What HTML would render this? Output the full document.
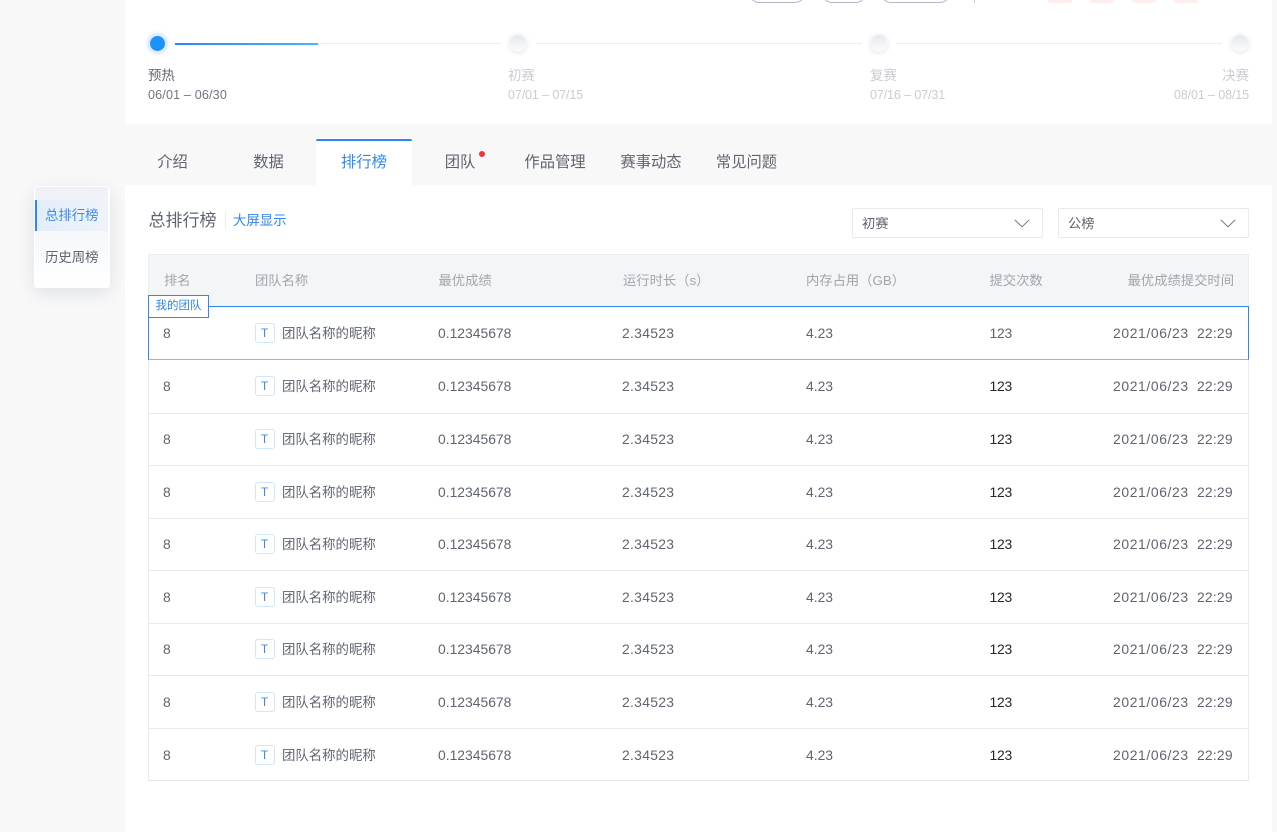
<!DOCTYPE html>
<html lang="zh">
<head>
<meta charset="utf-8">
<title>排行榜</title>
<style>
*{box-sizing:border-box;margin:0;padding:0}
html,body{width:1277px;height:832px;overflow:hidden;background:#f8f8f8}
body{position:relative;font-family:"Liberation Sans","Noto Sans CJK SC",sans-serif;color:#5f6570}
.a{position:absolute}
.t{position:absolute;white-space:nowrap;line-height:20px;height:20px}
.panel{position:absolute;background:#fff;left:125px;width:1147px}
.pill{position:absolute;top:-20px;height:23px;border:1px solid #b4bac6;border-radius:12px;background:#fff}
.red{position:absolute;top:0;height:3px;background:#ffeeee;border-radius:0 0 2px 2px}
.gl{position:absolute;top:43px;height:1px;background:#eceef2}
.gd{position:absolute;top:34px;width:18px;height:18px;border-radius:50%;background:linear-gradient(#e6e8ec,#fcfcfd);border:1px solid #f4f6f9;box-shadow:0 1px 5px rgba(120,140,180,.22)}
.sn{font-size:13.4px;color:#5f6570;top:66px}
.sd{font-size:12.6px;color:#6f7580;top:85px}
.off{color:#c9ccd2;}
.sd.off{letter-spacing:-.15px}
.tab{position:absolute;top:153px;font-size:15.3px;line-height:20px;color:#5f6570;white-space:nowrap;transform:translateX(-50%)}
.sel{position:absolute;top:208px;width:191px;height:30px;border:1px solid #e9eaec;border-radius:2px;background:#fff}
.sel span{position:absolute;left:9px;top:5px;font-size:13.3px;line-height:20px;color:#5f6570}
.sel svg{position:absolute;right:12px;top:10px}
.th{position:absolute;top:271px;font-size:13.3px;line-height:20px;color:#a1a5ac;white-space:nowrap}
.row{position:absolute;left:0;width:1277px;height:20px}
.row .t{top:0;font-size:13.9px;color:#5f6570}
.c1{left:163px}
.ic{position:absolute;left:254.5px;top:0;width:20px;height:20px;border:1px solid #cde8fb;border-radius:3px;font-size:12px;line-height:18px;text-align:center;color:#3d8bf2}
.row .nm{left:282px;font-size:13.4px;top:1px}
.c3{left:438px}
.row .c4{left:622px;letter-spacing:.3px}
.c5{left:806px}
.row .c6{left:989.5px;color:#24272c;letter-spacing:-.2px}
.row .c7{left:1113px;letter-spacing:.62px}
.row .c8{left:1197px;letter-spacing:.2px}
.line{position:absolute;left:148px;width:1101px;height:1px;background:#e9eaec}
</style>
</head>
<body>

<!-- top white panel -->
<div class="panel" style="top:0;height:124px"></div>
<!-- main white panel -->
<div class="panel" style="top:184.5px;height:648px"></div>

<!-- header remnants -->
<div class="pill" style="left:748px;width:58px"></div>
<div class="pill" style="left:821px;width:46px"></div>
<div class="pill" style="left:880px;width:71px"></div>
<div class="a" style="left:974px;top:0;width:1px;height:3px;background:#c8c8c8"></div>
<div class="red" style="left:1048px;width:24px"></div>
<div class="red" style="left:1090px;width:24px"></div>
<div class="red" style="left:1132px;width:24px"></div>
<div class="red" style="left:1174px;width:24px"></div>

<!-- stepper -->
<div class="a" style="left:148px;top:33.5px;width:19px;height:19px;border-radius:50%;background:#dfecff;box-shadow:0 0 4px rgba(70,130,240,.35)"></div>
<div class="a" style="left:150px;top:35.5px;width:15px;height:15px;border-radius:50%;background:#1c93fb"></div>
<div class="a" style="left:175px;top:42.5px;width:143px;height:2px;background:linear-gradient(90deg,#2f86f6,#49b4fb)"></div>
<div class="gl" style="left:318px;width:183px"></div>
<div class="gl" style="left:536px;width:326px"></div>
<div class="gl" style="left:896px;width:326px"></div>
<div class="gd" style="left:508.5px"></div>
<div class="gd" style="left:870px"></div>
<div class="gd" style="left:1230.5px"></div>

<div class="t sn" style="left:148px">预热</div>
<div class="t sd" style="left:148px;letter-spacing:.15px">06/01 – 06/30</div>
<div class="t sn off" style="left:508px">初赛</div>
<div class="t sd off" style="left:508px">07/01 – 07/15</div>
<div class="t sn off" style="left:870px">复赛</div>
<div class="t sd off" style="left:870px">07/16 – 07/31</div>
<div class="t sn off" style="right:28px">决赛</div>
<div class="t sd off" style="right:28px">08/01 – 08/15</div>

<!-- tabs -->
<div class="a" style="left:316px;top:139px;width:96px;height:46px;background:#fff;border-top:2px solid #2f86f6;border-radius:2px 2px 0 0"></div>
<div class="tab" style="left:172.5px">介绍</div>
<div class="tab" style="left:268.5px">数据</div>
<div class="tab" style="left:364px;color:#2f86f6">排行榜</div>
<div class="tab" style="left:460px">团队</div>
<div class="a" style="left:478.5px;top:150.5px;width:6px;height:6px;border-radius:50%;background:#f5333f"></div>
<div class="tab" style="left:555px">作品管理</div>
<div class="tab" style="left:651px">赛事动态</div>
<div class="tab" style="left:746.5px">常见问题</div>

<!-- side nav -->
<div class="a" style="left:34px;top:186px;width:76px;height:102px;border:2px solid #fff;border-width:1px 2px 2px 1px;border-radius:3px;background:linear-gradient(#eef1f6,#ffffff);box-shadow:0 5px 16px rgba(120,135,170,.2)"></div>
<div class="a" style="left:35px;top:200px;width:73px;height:31px;background:linear-gradient(90deg,#e3edfb,#eff3f9);border-left:2px solid #2f86f6"></div>
<div class="t" style="left:45px;top:206px;font-size:13.4px;color:#3d8bf2">总排行榜</div>
<div class="t" style="left:45px;top:248px;font-size:13.4px;color:#5f6570">历史周榜</div>

<!-- title -->
<div class="t" style="left:148.5px;top:211px;font-size:17px;color:#5f6570">总排行榜</div>
<div class="a" style="left:225px;top:211px;width:1px;height:18px;background:#eeeeee"></div>
<div class="t" style="left:233px;top:211px;font-size:13.4px;color:#2f86f6">大屏显示</div>

<!-- selects -->
<div class="sel" style="left:852px"><span>初赛</span><svg width="16" height="9" viewBox="0 0 16 9"><path d="M.8.8 8 7.8 15.2.8" fill="none" stroke="#70757e" stroke-width="1"/></svg></div>
<div class="sel" style="left:1058px"><span>公榜</span><svg width="16" height="9" viewBox="0 0 16 9"><path d="M.8.8 8 7.8 15.2.8" fill="none" stroke="#70757e" stroke-width="1"/></svg></div>

<!-- table frame -->
<div class="a" style="left:148px;top:254px;width:1101px;height:527px;border:1px solid #e9eaec;border-top:0"></div>
<div class="a" style="left:148px;top:254px;width:1101px;height:53px;background:#f4f5f7;border:1px solid #eceef0;border-bottom:0"></div>

<div class="th" style="left:164px">排名</div>
<div class="th" style="left:255px">团队名称</div>
<div class="th" style="left:438.5px">最优成绩</div>
<div class="th" style="left:623px">运行时长（s）</div>
<div class="th" style="left:806px">内存占用（GB）</div>
<div class="th" style="left:989.5px">提交次数</div>
<div class="th" style="right:43px">最优成绩提交时间</div>

<div class="line" style="top:412.5px"></div>
<div class="line" style="top:465px"></div>
<div class="line" style="top:517.5px"></div>
<div class="line" style="top:570px"></div>
<div class="line" style="top:622.8px"></div>
<div class="line" style="top:675.4px"></div>
<div class="line" style="top:728px"></div>
<div class="line" style="top:780.2px"></div>

<!-- my row highlight -->
<div class="a" style="left:148px;top:306px;width:1101px;height:54px;border:1px solid #2f86f6;border-bottom-color:#86b6f8;background:#fff"></div>
<div class="a" style="left:148px;top:295px;width:61px;height:23px;border:1px solid #2f86f6;background:#fff;font-size:11.5px;line-height:21px;text-align:center;color:#2f86f6;white-space:nowrap">我的团队</div>

<!-- rows -->
<div class="row" style="top:323px"><div class="t c1">8</div><div class="ic">T</div><div class="t nm">团队名称的昵称</div><div class="t c3">0.12345678</div><div class="t c4">2.34523</div><div class="t c5">4.23</div><div class="t c6" style="color:#5f6570">123</div><div class="t c7">2021/06/23</div><div class="t c8">22:29</div></div>
<div class="row" style="top:376px"><div class="t c1">8</div><div class="ic">T</div><div class="t nm">团队名称的昵称</div><div class="t c3">0.12345678</div><div class="t c4">2.34523</div><div class="t c5">4.23</div><div class="t c6">123</div><div class="t c7">2021/06/23</div><div class="t c8">22:29</div></div>
<div class="row" style="top:429px"><div class="t c1">8</div><div class="ic">T</div><div class="t nm">团队名称的昵称</div><div class="t c3">0.12345678</div><div class="t c4">2.34523</div><div class="t c5">4.23</div><div class="t c6">123</div><div class="t c7">2021/06/23</div><div class="t c8">22:29</div></div>
<div class="row" style="top:481.5px"><div class="t c1">8</div><div class="ic">T</div><div class="t nm">团队名称的昵称</div><div class="t c3">0.12345678</div><div class="t c4">2.34523</div><div class="t c5">4.23</div><div class="t c6">123</div><div class="t c7">2021/06/23</div><div class="t c8">22:29</div></div>
<div class="row" style="top:534px"><div class="t c1">8</div><div class="ic">T</div><div class="t nm">团队名称的昵称</div><div class="t c3">0.12345678</div><div class="t c4">2.34523</div><div class="t c5">4.23</div><div class="t c6">123</div><div class="t c7">2021/06/23</div><div class="t c8">22:29</div></div>
<div class="row" style="top:586.5px"><div class="t c1">8</div><div class="ic">T</div><div class="t nm">团队名称的昵称</div><div class="t c3">0.12345678</div><div class="t c4">2.34523</div><div class="t c5">4.23</div><div class="t c6">123</div><div class="t c7">2021/06/23</div><div class="t c8">22:29</div></div>
<div class="row" style="top:639px"><div class="t c1">8</div><div class="ic">T</div><div class="t nm">团队名称的昵称</div><div class="t c3">0.12345678</div><div class="t c4">2.34523</div><div class="t c5">4.23</div><div class="t c6">123</div><div class="t c7">2021/06/23</div><div class="t c8">22:29</div></div>
<div class="row" style="top:692px"><div class="t c1">8</div><div class="ic">T</div><div class="t nm">团队名称的昵称</div><div class="t c3">0.12345678</div><div class="t c4">2.34523</div><div class="t c5">4.23</div><div class="t c6">123</div><div class="t c7">2021/06/23</div><div class="t c8">22:29</div></div>
<div class="row" style="top:744.5px"><div class="t c1">8</div><div class="ic">T</div><div class="t nm">团队名称的昵称</div><div class="t c3">0.12345678</div><div class="t c4">2.34523</div><div class="t c5">4.23</div><div class="t c6">123</div><div class="t c7">2021/06/23</div><div class="t c8">22:29</div></div>

</body>
</html>
